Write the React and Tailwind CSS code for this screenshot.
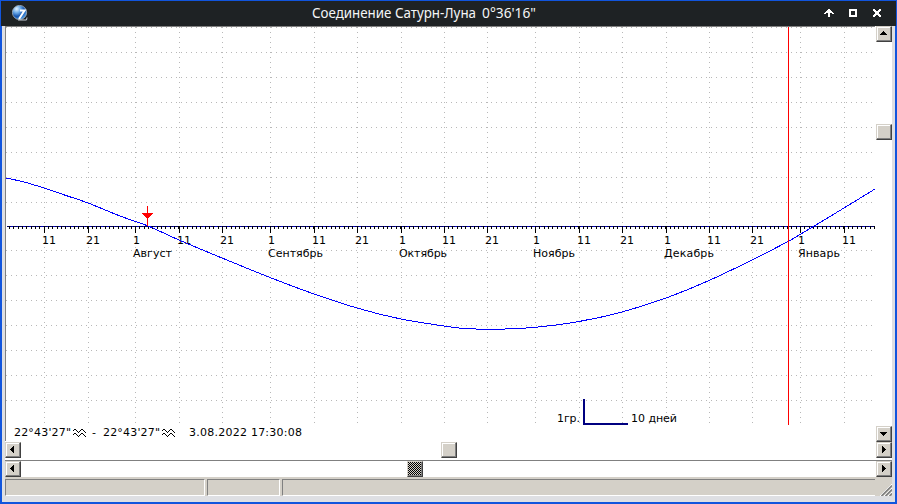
import React from "react";

const MAJORS = [
  [44, "11"], [88, "21"], [135, "1"], [179, "11"], [222, "21"], [270, "1"],
  [314, "11"], [357, "21"], [401, "1"], [444, "11"], [487, "21"], [535, "1"],
  [579, "11"], [622, "21"], [666, "1"], [709, "11"], [752, "21"], [800, "1"], [844, "11"],
];
const MONTHS = [
  [133, "Август", 39], [268, "Сентябрь", 55], [399, "Октябрь", 48],
  [533, "Ноябрь", 42], [664, "Декабрь", 50], [798, "Январь", 42],
];
const ROWS = [27, 52, 77, 102, 127, 152, 177, 202, 250, 275, 300, 325, 350, 375, 400];
const CURVE = [
  [6, 178], [24, 182], [44, 188], [66, 195.5], [88, 203], [120, 216], [148, 226], [179, 240], [222, 258],
  [270, 277.5], [314, 294], [357, 308], [401, 319], [444, 326], [465, 328.5], [497, 329.2],
  [535, 327.3], [579, 321.5], [622, 312], [666, 298], [709, 280.5], [752, 260],
  [788, 241.5], [800, 234.5], [844, 208], [875, 189],
];
const TICKS = Array.from({ length: 200 }, (_, i) => Math.round(135 + (i - 29) * 4.3464)).filter((x) => x < 875 && x > 6);

// Catmull-Rom spline through the sampled positions
function spline(p) {
  let d = `M${p[0][0]} ${p[0][1]}`;
  for (let i = 0; i < p.length - 1; i++) {
    const a = p[i - 1] || p[i];
    const b = p[i];
    const c = p[i + 1];
    const e = p[i + 2] || c;
    d += ` C${b[0] + (c[0] - a[0]) / 6} ${b[1] + (c[1] - a[1]) / 6} ${c[0] - (e[0] - b[0]) / 6} ${c[1] - (e[1] - b[1]) / 6} ${c[0]} ${c[1]}`;
  }
  return d;
}

function Label({ x, y, w, children }) {
  return (
    <text x={x} y={y} textLength={w} lengthAdjust="spacing" fill="#000" className="text-[11px]">
      {children}
    </text>
  );
}

// Aquarius sign: two stacked one-pixel waves
const WAVE = "M0 1h1v1H0zM1 0h2v1H1zM3 1h1v1H3zM4 2h1v1H4zM5 3h1v1H5zM6 2h1v1H6zM7 1h1v1H7zM8 0h2v1H8zM10 1h1v1h-1zM11 2h1v1h-1zM12 3h1v1h-1z";

function Waves({ x, y }) {
  return (
    <g transform={`translate(${x} ${y})`} fill="#000">
      <path d={WAVE} />
      <path d={WAVE} transform="translate(0 4)" />
    </g>
  );
}

function Chart() {
  return (
    <svg width="869" height="414" viewBox="6 27 869 414" shapeRendering="crispEdges" className="block shrink-0 font-['DejaVu_Sans',Verdana,sans-serif]">
      <g stroke="#b8b8b8" strokeDasharray="1 4">
        {ROWS.map((y) => <path key={y} d={`M6 ${y + 0.5}H873`} />)}
        {MAJORS.map(([x]) => <path key={x} d={`M${x + 0.5} 27V425`} />)}
      </g>
      <path d="M7 226.5H875" stroke="#0000c0" />
      <path d="M7 226.5H875" stroke="#000060" strokeDasharray="4 2" />
      {TICKS.map((x) => <path key={x} d={`M${x + 0.5} 226V229`} stroke="#000" />)}
      {MAJORS.map(([x, t]) => (
        <g key={x}>
          <path d={`M${x + 0.5} 226V233`} stroke="#000" />
          <Label x={x - 2} y={244} w={t.length * 7}>{t}</Label>
        </g>
      ))}
      {MONTHS.map(([x, t, w]) => <Label key={x} x={x} y={257} w={w}>{t}</Label>)}
      <path d={spline(CURVE)} fill="none" stroke="#0000ff" />
      <path d="M788.5 27V425" stroke="#ff0000" />
      <path d="M147.5 206V226" stroke="#ff0000" />
      <path d="M142 213h11v1h-1v1h-1v1h-1v1h-1v1h-1v1h-1v-1h-1v-1h-1v-1h-1v-1h-1v-1h-1z" fill="#ff0000" />
      <Label x={557} y={422} w={23}>1гр.</Label>
      <path d="M583 399h2v24h43v2h-45z" fill="#000080" />
      <Label x={631} y={422} w={46}>10 дней</Label>
      <Label x={14} y={436} w={57}>22°43'27"</Label>
      <Waves x={73} y={429} />
      <Label x={92} y={436} w={5}>-</Label>
      <Label x={103} y={436} w={57}>22°43'27"</Label>
      <Waves x={162} y={429} />
      <Label x={189} y={436} w={113}>3.08.2022 17:30:08</Label>
    </svg>
  );
}

const ARROWS = {
  up: "M7 5h1v1h1v1h1v1h1v1H4V8h1V7h1V6h1z",
  down: "M4 6h7v1h-1v1H9v1H8v1H7V9H6V8H5V7H4z",
  left: "M5 7h1V6h1V5h1V4h1v7H8v-1H7V9H6V8H5z",
  right: "M6 4h1v1h1v1h1v1h1v1H9v1H8v1H7v1H6z",
};

function Button({ dir, dark }) {
  return (
    <div className="h-4 w-4 shrink-0 border border-b-[#404040] border-r-[#404040] border-l-[#d4d0c8] border-t-[#d4d0c8] bg-[#d4d0c8]">
      <svg width="14" height="14" viewBox="1 1 14 14" shapeRendering="crispEdges" className="block">
        {dark ? (
          <>
            <defs>
              <pattern id="check" width="2" height="2" patternUnits="userSpaceOnUse">
                <rect width="2" height="2" fill="#d4d0c8" />
                <path d="M0 0h1v1H0zM1 1h1v1H1z" fill="#000" />
              </pattern>
            </defs>
            <rect x="1" y="1" width="13" height="13" fill="url(#check)" />
          </>
        ) : (
          <path d="M1.5 14V1.5H14" fill="none" stroke="#fff" />
        )}
        <path d="M1 14.5H14.5V1" fill="none" stroke="#808080" />
        {dir && <path d={ARROWS[dir]} fill="#000" />}
      </svg>
    </div>
  );
}

function TitleBar() {
  return (
    <header className="mx-px flex h-[25px] shrink-0 items-start bg-[#1e2224]">
      <div className="w-[100px] pl-[11px] pt-1">
        <svg width="16" height="16" viewBox="0 0 16 16" className="block">
          <defs>
            <radialGradient id="globe" cx=".3" cy=".25" r=".8">
              <stop offset="0" stopColor="#e4f3ff" />
              <stop offset=".35" stopColor="#6aa9e8" />
              <stop offset=".65" stopColor="#1554ae" />
              <stop offset="1" stopColor="#4f9ce6" />
            </radialGradient>
          </defs>
          <circle cx="7.5" cy="7.5" r="7.1" fill="url(#globe)" stroke="#a7b4c0" strokeWidth=".8" />
          <path d="M8 5.6h4.5L7 14" fill="none" stroke="#fff" strokeWidth="2" />
          <path d="M6 15h8.5l.5-2.5" fill="none" stroke="#c8ced6" strokeWidth="1" />
        </svg>
      </div>
      <div className="flex flex-1 justify-center pr-[58px]">
        <svg width="236" height="25" className="block font-['Noto_Sans','Open_Sans',sans-serif]">
          <text x="5" y="17" textLength="164" lengthAdjust="spacingAndGlyphs" fill="#f4f6f7" className="text-[14px]">Соединение Сатурн-Луна</text>
          <text x="175" y="17" textLength="54" lengthAdjust="spacingAndGlyphs" fill="#f4f6f7" className="text-[14px]">0°36'16"</text>
        </svg>
      </div>
      <div className="flex w-[90px] justify-end gap-[14px] pr-[14px] pt-[7px]">
        <svg width="10" height="10" shapeRendering="crispEdges" className="block">
          <path d="M4 1h2v1h1v1h1v1h1v1h1v1H8V5H6v4H4V5H2v1H0V5h1V4h1V3h1V2h1z" fill="#fff" />
        </svg>
        <svg width="10" height="10" shapeRendering="crispEdges" className="block">
          <rect x="2" y="2" width="6" height="6" fill="none" stroke="#fff" strokeWidth="2" />
        </svg>
        <svg width="10" height="10" shapeRendering="crispEdges" className="block">
          <path d="M1 1h2v1h1v1h2V2h1V1h2v2H8v1H7v2h1v1h1v2H7V8H6V7H4v1H3v1H1V7h1V6h1V4H2V3H1z" fill="#fff" />
        </svg>
      </div>
    </header>
  );
}

export default function App() {
  return (
    <div className="flex h-[504px] w-[897px] flex-col overflow-hidden bg-[#1155dd] pt-px">
      <TitleBar />
      <div className="mx-[2px] mb-[2px] flex flex-1 flex-col bg-[#dedfe3] px-[3px]">
        <div className="flex h-[416px] shrink-0 bg-white">
          <div className="h-[415px] w-[870px] border-l border-t border-[#808080] bg-white">
            <Chart />
          </div>
          <div className="flex w-[17px] flex-col items-end bg-white">
            <Button dir="up" />
            <div className="h-[82px]" />
            <Button />
            <div className="flex-1" />
            <Button dir="down" />
          </div>
        </div>
        <div className="flex h-[18px] shrink-0 bg-white">
          <Button dir="left" />
          <div className="w-[420px]" />
          <Button />
          <div className="flex-1" />
          <Button dir="right" />
        </div>
        <div className="flex h-[17px] shrink-0 border-t border-[#808080] bg-white">
          <Button dir="left" />
          <div className="w-[386px]" />
          <Button dark />
          <div className="flex-1" />
          <Button dir="right" />
        </div>
        <footer className="flex h-[19px] shrink-0 gap-[2px] bg-[#d4d0c8] pt-[2px]">
          <div className="w-[200px] border border-b-white border-r-white border-l-[#808080] border-t-[#808080]" />
          <div className="w-[73px] border border-b-white border-r-white border-l-[#808080] border-t-[#808080]" />
          <div className="w-[593px] border border-r-0 border-b-white border-l-[#808080] border-t-[#808080]" />
          <div className="flex flex-1 items-end justify-end">
            <svg width="12" height="12" className="block">
              <path d="M0 12 12 0M4 12 12 4M8 12 12 8" stroke="#fff" strokeWidth="1" />
              <path d="M1.5 12 12 1.5M5.5 12 12 5.5M9.5 12 12 9.5" stroke="#808080" strokeWidth="1.7" />
            </svg>
          </div>
        </footer>
      </div>
    </div>
  );
}
